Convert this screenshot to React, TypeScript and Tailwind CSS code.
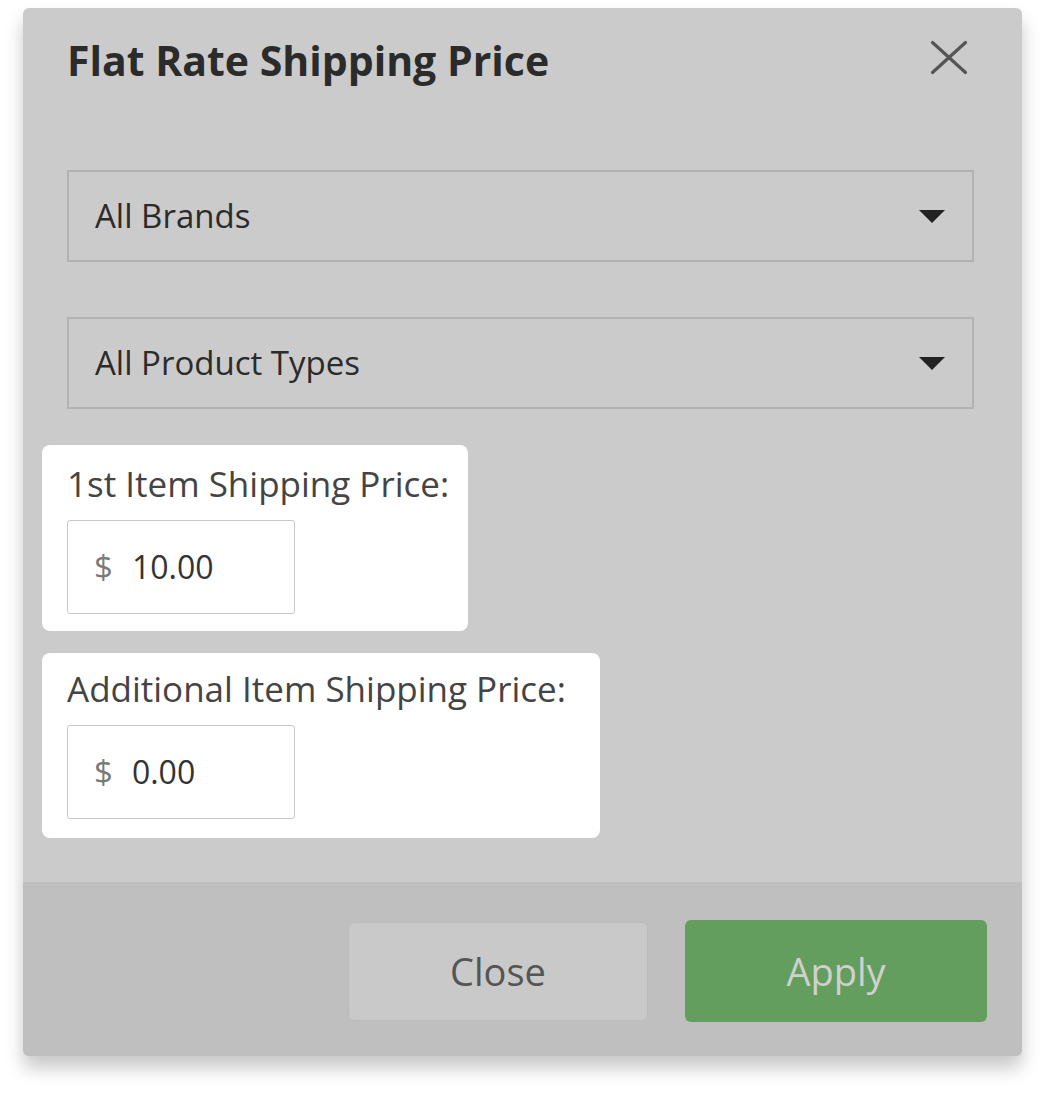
function Select({ label }: { label: string }) {
  return (
    <div className="flex h-[92px] items-center justify-between border-2 border-[#b2b2b2] pl-[26px] pr-[27px]">
      <span className="text-[33px] text-[#2b2b2b]">{label}</span>
      <svg width="26" height="13" viewBox="0 0 26 13">
        <path d="M0 0 L26 0 L13 13 Z" fill="#222" />
      </svg>
    </div>
  );
}

function PriceField({ label, value, width, pad }: { label: string; value: string; width: string; pad: string }) {
  return (
    <div className={`rounded-lg bg-white pl-[25px] ${pad} ${width}`}>
      <div className="text-[35px] leading-[40px] text-[#444]">{label}</div>
      <div className="mt-[16px] flex h-[94px] w-[228px] items-center gap-[19px] rounded-[3px] border border-[#c8c8c8] pl-[26px]">
        <span className="text-[33px] text-[#7a7a7a]">$</span>
        <span className="text-[32px] text-[#333]">{value}</span>
      </div>
    </div>
  );
}

export default function App() {
  return (
    <div className="min-h-screen bg-white pt-2 pl-[23px]" style={{ fontFamily: "'Open Sans', sans-serif" }}>
      <div className="w-[999px] overflow-hidden rounded-md bg-[#cbcbcb] shadow-[0_12px_18px_rgba(0,0,0,0.22)]">
        <div className="pl-[44px] pr-[48px] pt-[25px] pb-[44px]">
          <div className="flex items-start justify-between">
            <h1 className="text-[41px] font-bold leading-[54px] text-[#2b2b2b]">Flat Rate Shipping Price</h1>
            <svg className="mt-[7px] mr-[6px]" width="38" height="35" viewBox="0 0 38 35">
              <path d="M2.5 2.5 L35.5 32.5 M35.5 2.5 L2.5 32.5" stroke="#555" strokeWidth="3.2" strokeLinecap="round" fill="none" />
            </svg>
          </div>
          <div className="mt-[83px] space-y-[55px]">
            <Select label="All Brands" />
            <Select label="All Product Types" />
          </div>
          <div className="-ml-[25px] mt-[36px] flex flex-col items-start gap-[22px]">
            <PriceField label="1st Item Shipping Price:" value="10.00" width="w-[426px]" pad="pt-[19px] pb-[17px]" />
            <PriceField label="Additional Item Shipping Price:" value="0.00" width="w-[558px]" pad="pt-[16px] pb-[19px]" />
          </div>
        </div>
        <div className="flex h-[174px] items-start justify-end gap-[37px] bg-[#bfbfbf] pt-[38px] pr-[35px]">
          <button className="mt-[2px] h-[99px] w-[300px] rounded-md border border-[#bbb] bg-[#c9c9c9] text-[38px] text-[#555]">
            Close
          </button>
          <button className="h-[102px] w-[302px] rounded-md bg-[#639e5e] text-[38px] text-[#d0d0d0]">
            Apply
          </button>
        </div>
      </div>
    </div>
  );
}
